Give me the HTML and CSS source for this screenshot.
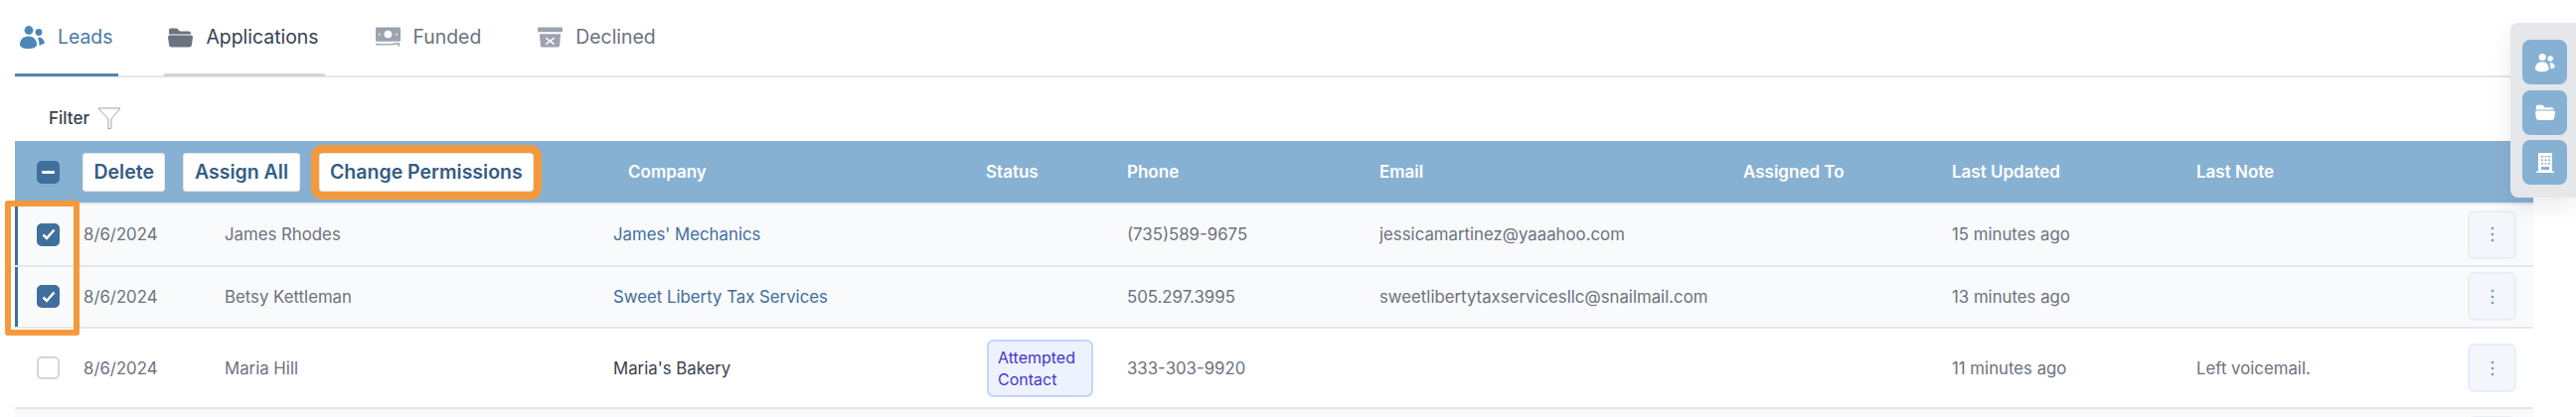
FILE: index.html
```html
<!DOCTYPE html>
<html>
<head>
    <title>Leads</title>
    <link rel="stylesheet" href="styles.css">
</head>
<body>
    <!-- Tabs -->
    <div class="tabs">
        <div class="tab active">
            <svg class="tab-icon" viewBox="0 0 25 23"><circle cx="9" cy="4.5" r="4.4"/><circle cx="19" cy="6.5" r="3.4"/><path d="M0 19c0-5 3.500-8.500 8.500-8.500S17 14 17 19c0 2.500-3.500 4-8.500 4S0 21.500 0 19z"/><path d="M18 12c3.500-1 6 1 7 5.500l-5.500 2.500c0-3-.3-5.500-1.500-8z"/></svg>
            <span>Leads</span>
        </div>
        <div class="tab hovered">
            <svg class="tab-icon" viewBox="0 0 25 20"><path d="M1 7V3a2 2 0 0 1 2-2h6l3 3h9a2 2 0 0 1 2 2v1z"/><path d="M0 10a2 2 0 0 1 2-2h21a2 2 0 0 1 2 2l-1 7a3 3 0 0 1-3 3H4a3 3 0 0 1-3-3z"/></svg>
            <span>Applications</span>
        </div>
        <div class="tab">
            <svg class="tab-icon" viewBox="0 0 26 21"><path fill-rule="evenodd" d="M1 0h24a1 1 0 0 1 1 1v13a1 1 0 0 1-1 1H1a1 1 0 0 1-1-1V1a1 1 0 0 1 1-1zm12 3.500a4 4 0 1 0 0 8 4 4 0 0 0 0-8zM4 6.500a1 1 0 1 0 0 2 1 1 0 0 0 0-2zm18 0a1 1 0 1 0 0 2 1 1 0 0 0 0-2z"/><path d="M0 17c6 .5 14 .8 22-.5 1.500-.2 3-.5 3 1v2.500h-1.500v-2C16 19 7 19 0 18.500z"/></svg>
            <span>Funded</span>
        </div>
        <div class="tab">
            <svg class="tab-icon" viewBox="0 0 26 21"><rect width="26" height="5" rx="1"/><path fill-rule="evenodd" d="M2 7h22l-1 12a2 2 0 0 1-2 2H5a2 2 0 0 1-2-2zm7 3.500L8 11.500l3.500 3L8 17.500l1 1 4-3 4 3 1-1-3.500-3 3.500-3-1-1-4 3z"/></svg>
            <span>Declined</span>
        </div>
    </div>

    <div class="filter">
        <span>Filter</span>
        <svg class="filter-icon" viewBox="0 0 24 23"><path d="M1 1h22l-9 11v9l-3 1V12z"/></svg>
    </div>

    <!-- Table -->
    <div class="table">
        <div class="row head">
            <div class="bulk">
                <div class="box checked"><span class="minus"></span></div>
                <button class="btn">Delete</button>
                <button class="btn">Assign All</button>
                <button class="btn marked">Change Permissions</button>
            </div>
            <div class="company-head">Company</div>
            <div>Status</div>
            <div>Phone</div>
            <div>Email</div>
            <div>Assigned To</div>
            <div>Last Updated</div>
            <div>Last Note</div>
        </div>

        <div class="row selected">
            <div class="box checked"><svg class="check" viewBox="0 0 14 12"><path d="M1.500 6.500l3.500 3.500 7.500-8.500"/></svg></div>
            <div>8/6/2024</div>
            <div>James Rhodes</div>
            <div class="link">James' Mechanics</div>
            <div></div>
            <div>(735)589-9675</div>
            <div>jessicamartinez@yaaahoo.com</div>
            <div></div>
            <div>15 minutes ago</div>
            <div></div>
            <div class="more"><svg viewBox="0 0 4 16"><circle cx="2" cy="2" r="1.300"/><circle cx="2" cy="8" r="1.300"/><circle cx="2" cy="14" r="1.300"/></svg></div>
        </div>

        <div class="row selected">
            <div class="box checked"><svg class="check" viewBox="0 0 14 12"><path d="M1.500 6.500l3.500 3.500 7.500-8.500"/></svg></div>
            <div>8/6/2024</div>
            <div>Betsy Kettleman</div>
            <div class="link">Sweet Liberty Tax Services</div>
            <div></div>
            <div>505.297.3995</div>
            <div>sweetlibertytaxservicesllc@snailmail.com</div>
            <div></div>
            <div>13 minutes ago</div>
            <div></div>
            <div class="more"><svg viewBox="0 0 4 16"><circle cx="2" cy="2" r="1.300"/><circle cx="2" cy="8" r="1.300"/><circle cx="2" cy="14" r="1.300"/></svg></div>
        </div>

        <div class="row tall">
            <div class="box"></div>
            <div>8/6/2024</div>
            <div>Maria Hill</div>
            <div class="dark">Maria's Bakery</div>
            <div><span class="badge">Attempted Contact</span></div>
            <div>333-303-9920</div>
            <div></div>
            <div></div>
            <div>11 minutes ago</div>
            <div>Left voicemail.</div>
            <div class="more"><svg viewBox="0 0 4 16"><circle cx="2" cy="2" r="1.300"/><circle cx="2" cy="8" r="1.300"/><circle cx="2" cy="14" r="1.300"/></svg></div>
        </div>

        <div class="row selected-off">
            <div></div><div></div><div></div><div></div><div></div><div></div><div></div><div></div><div></div><div></div>
            <div class="more"></div>
        </div>

        <!-- Orange note around the ticked boxes -->
        <div class="mark-boxes"></div>
    </div>

    <!-- Quick add panel -->
    <div class="side">
        <div class="side-btn">
            <svg viewBox="0 0 25 23"><circle cx="9" cy="4.500" r="4.400"/><circle cx="19" cy="6.500" r="3.400"/><path d="M0 19c0-5 3.500-8.500 8.500-8.500S17 14 17 19c0 2.500-3.500 4-8.500 4S0 21.500 0 19z"/><path d="M18 12c3.500-1 6 1 7 5.500l-5.500 2.500c0-3-.3-5.500-1.500-8z"/></svg>
        </div>
        <div class="side-btn">
            <svg viewBox="0 0 25 20"><path d="M1 7V3a2 2 0 0 1 2-2h6l3 3h9a2 2 0 0 1 2 2v1z"/><path d="M0 10a2 2 0 0 1 2-2h21a2 2 0 0 1 2 2l-1 7a3 3 0 0 1-3 3H4a3 3 0 0 1-3-3z"/></svg>
        </div>
        <div class="side-btn">
            <svg viewBox="0 0 18 20"><path fill-rule="evenodd" d="M2 0h14v18.500h2V20H0v-1.500h2zm3 3v1.500h2V3zm3.500 0v1.500h2V3zM12 3v1.500h2V3zM5 6.500V8h2V6.500zm3.500 0V8h2V6.500zm3.500 0V8h2V6.500zM5 10v1.500h2V10zm3.500 0v1.500h2V10zm3.500 0v1.500h2V10zM5 14v3h8v-3z"/></svg>
        </div>
    </div>
</body>
</html>
```

FILE: styles.css
```css
* { box-sizing: border-box; }
html, body { height: 420px; overflow: hidden; }
body {
    margin: 0;
    position: relative;
    background: #fff;
    font-family: Inter, "Liberation Sans", sans-serif;
    font-size: 16.800px;
    color: #6b7280;
}

.tabs {
    display: flex;
    gap: 46px;
    height: 78px;
    margin: 0 43px 0 15px;
    border-bottom: 2px solid #e5e7eb;
}
.tab {
    display: flex;
    align-items: center;
    gap: 13px;
    height: 77px;
    padding: 0 6px 0 5px;
    font-size: 19.400px;
    border-bottom: 3px solid transparent;
}
.tab-icon { width: 25px; height: 23px; fill: #9ca3af; }
.tab.active { color: #4a7aa5; border-bottom-color: #4c86b9; }
.tab.active .tab-icon { fill: #4c86b9; }
.tab.hovered { color: #374151; border-bottom-color: #d1d5db; padding-left: 4px; }
.tab.hovered .tab-icon { fill: #6b7280; }

.filter {
    display: flex;
    align-items: center;
    gap: 8px;
    height: 64px;
    padding: 18px 0 0 49px;
    font-size: 17px;
    font-weight: 500;
    color: #374151;
}
.filter-icon { width: 24px; height: 23px; fill: none; stroke: #9ca3af; stroke-width: 1; }

.table { position: relative; margin: 0 43px 0 15px; }
.row {
    display: grid;
    grid-template-columns: 69px 142px 391px 375px 142px 254px 366px 210px 246px 273px 66px;
    align-items: center;
    height: 62.500px;
    border-bottom: 2px solid #e5e7eb;
}
.row > .box { margin-left: 22px; }
.selected { background: #f9fafb; box-shadow: inset 3px 0 0 #3f6f9c; }
.selected-off { background: #f9fafb; align-items: start; padding-top: 7px; border-bottom: 0; }
.tall { height: 81px; }

.head {
    height: 64px;
    background: #87b1d3;
    color: #fff;
    font-size: 17px;
    font-weight: 600;
}
.bulk {
    grid-column: span 3;
    display: flex;
    align-items: center;
    padding-left: 22px;
}
.company-head { padding-left: 15px; }

.box {
    display: flex;
    align-items: center;
    justify-content: center;
    width: 23px;
    height: 23px;
    border: 2px solid #d1d5db;
    border-radius: 5px;
    background: #fff;
}
.box.checked { background: #3f6f9c; border-color: #3f6f9c; }
.minus { width: 13px; height: 3px; background: #fff; border-radius: 1px; }
.check { width: 14px; height: 12px; fill: none; stroke: #fff; stroke-width: 2.500; }

.btn {
    height: 39px;
    margin-left: 23px;
    padding: 0 10.500px;
    border: 1px solid #e5e7eb;
    border-radius: 3px;
    background: #fff;
    color: #335d85;
    font-family: inherit;
    font-size: 19.500px;
    font-weight: 600;
}
.btn + .btn { margin-left: 18px; }
.btn.marked { margin-left: 19px; outline: 8px solid #f59a3c; }

.link { color: #3f6f9c; }
.dark { color: #374151; }

.badge {
    display: block;
    width: 107px;
    margin-left: 1px;
    padding: 5px 9px;
    border: 2px solid #c7d2fe;
    border-radius: 7px;
    background: #eef2ff;
    color: #4338ca;
    font-size: 16px;
    line-height: 22px;
}

.more {
    display: flex;
    align-items: center;
    justify-content: center;
    width: 49px;
    height: 49px;
    border: 2px solid #e9eef5;
    border-radius: 7px;
    background: #f3f6fa;
}
.more svg { width: 4px; height: 16px; fill: #6f9cc5; }

.mark-boxes {
    position: absolute;
    left: -10px;
    top: 60px;
    width: 75px;
    height: 136px;
    border: 6px solid #f59a3c;
    border-radius: 3px;
}

.side {
    position: absolute;
    top: 23px;
    right: 0;
    display: flex;
    flex-direction: column;
    gap: 5.500px;
    width: 66px;
    height: 176px;
    padding: 17px 9px 0 12px;
    background: #e5e7eb;
    border-radius: 8px 0 0 8px;
    box-shadow: 0 10px 24px rgba(0, 0, 0, 0.08);
}
.side-btn {
    display: flex;
    align-items: center;
    justify-content: center;
    width: 45px;
    height: 45px;
    border-radius: 8px;
    background: #87b1d3;
}
.side-btn svg { width: 20px; height: 20px; fill: #fff; }
```
